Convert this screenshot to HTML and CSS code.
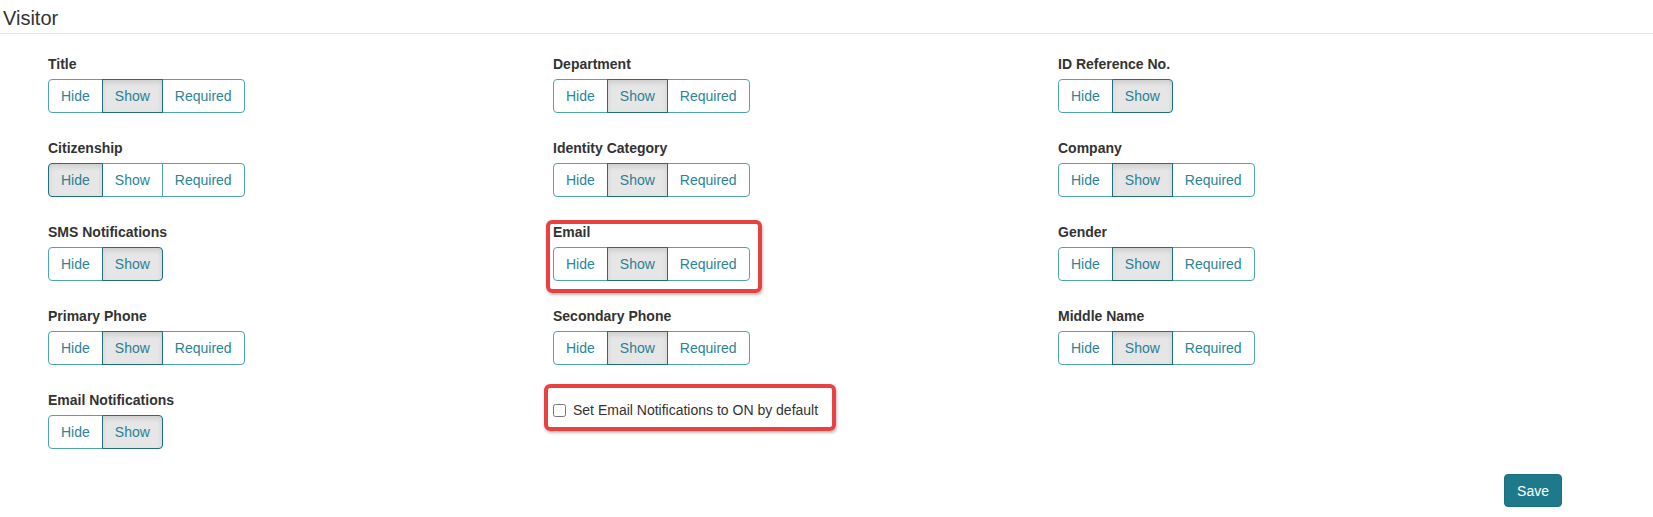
FILE: index.html
```html
<!DOCTYPE html>
<html>
<head>
<meta charset="utf-8">
<link rel="stylesheet" href="styles.css">
</head>
<body>
<h2 class="section-title">Visitor</h2>
<div class="fields">
  <div class="field">
    <div class="field-label">Title</div>
    <div class="btn-group"><button class="btn">Hide</button><button class="btn active">Show</button><button class="btn">Required</button></div>
  </div>
  <div class="field">
    <div class="field-label">Department</div>
    <div class="btn-group"><button class="btn">Hide</button><button class="btn active">Show</button><button class="btn">Required</button></div>
  </div>
  <div class="field">
    <div class="field-label">ID Reference No.</div>
    <div class="btn-group"><button class="btn">Hide</button><button class="btn active">Show</button></div>
  </div>

  <div class="field">
    <div class="field-label">Citizenship</div>
    <div class="btn-group"><button class="btn active">Hide</button><button class="btn">Show</button><button class="btn">Required</button></div>
  </div>
  <div class="field">
    <div class="field-label">Identity Category</div>
    <div class="btn-group"><button class="btn">Hide</button><button class="btn active">Show</button><button class="btn">Required</button></div>
  </div>
  <div class="field">
    <div class="field-label">Company</div>
    <div class="btn-group"><button class="btn">Hide</button><button class="btn active">Show</button><button class="btn">Required</button></div>
  </div>

  <div class="field">
    <div class="field-label">SMS Notifications</div>
    <div class="btn-group"><button class="btn">Hide</button><button class="btn active">Show</button></div>
  </div>
  <div class="field highlight highlight-email">
    <div class="field-label">Email</div>
    <div class="btn-group"><button class="btn">Hide</button><button class="btn active">Show</button><button class="btn">Required</button></div>
  </div>
  <div class="field">
    <div class="field-label">Gender</div>
    <div class="btn-group"><button class="btn">Hide</button><button class="btn active">Show</button><button class="btn">Required</button></div>
  </div>

  <div class="field">
    <div class="field-label">Primary Phone</div>
    <div class="btn-group"><button class="btn">Hide</button><button class="btn active">Show</button><button class="btn">Required</button></div>
  </div>
  <div class="field">
    <div class="field-label">Secondary Phone</div>
    <div class="btn-group"><button class="btn">Hide</button><button class="btn active">Show</button><button class="btn">Required</button></div>
  </div>
  <div class="field">
    <div class="field-label">Middle Name</div>
    <div class="btn-group"><button class="btn">Hide</button><button class="btn active">Show</button><button class="btn">Required</button></div>
  </div>

  <div class="field">
    <div class="field-label">Email Notifications</div>
    <div class="btn-group"><button class="btn">Hide</button><button class="btn active">Show</button></div>
  </div>
  <div class="field check-field highlight highlight-check">
    <label class="check-label"><input type="checkbox" class="check-input"><span>Set Email Notifications to ON by default</span></label>
  </div>
  <div class="field"></div>
</div>
<div class="actions">
  <button class="btn-save">Save</button>
</div>
</body>
</html>
```

FILE: styles.css
```css
*, *::before, *::after { box-sizing: border-box; }

body {
  margin: 0;
  font-family: "Liberation Sans", Arial, sans-serif;
  font-size: 14px;
  line-height: 20px;
  color: #333;
  background: #fff;
}

.section-title {
  margin: 6px 0 0 0;
  padding: 0 0 3px 3px;
  font-size: 20px;
  line-height: 24px;
  font-weight: normal;
  color: #333;
  border-bottom: 1px solid #e5e5e5;
}

.fields {
  display: grid;
  grid-template-columns: 505px 505px 505px;
  row-gap: 25px;
  padding: 20px 0 0 48px;
}

.field {
  position: relative;
  min-height: 59px;
}

.field-label {
  font-weight: bold;
  font-size: 14px;
  line-height: 20px;
  margin-bottom: 5px;
  color: #333;
}

.btn-group {
  display: inline-flex;
}

.btn {
  font-family: inherit;
  font-size: 14px;
  line-height: 20px;
  height: 34px;
  padding: 6px 12px;
  margin: 0;
  background: #fff;
  color: #2a8696;
  border: 1px solid #4fa4b1;
  border-radius: 0;
  cursor: pointer;
}

.btn + .btn { margin-left: -1px; }

.btn:first-child { border-radius: 4px 0 0 4px; }
.btn:last-child { border-radius: 0 4px 4px 0; }

.btn.active {
  position: relative;
  z-index: 1;
  background: #e6e6e6;
  border-color: #1f6f7e;
  color: #2a8193;
  box-shadow: inset 0 3px 5px rgba(0, 0, 0, 0.1);
}

.check-field {
  padding-top: 10px;
}

.check-label {
  display: flex;
  align-items: center;
  height: 20px;
  font-size: 14px;
  color: #333;
}

.check-input {
  width: 13px;
  height: 13px;
  margin: 0 7px 0 0;
}

.highlight::after {
  content: "";
  position: absolute;
  border: 4px solid #e9413f;
  border-radius: 6px;
  box-shadow: 1px 2px 3px rgba(0, 0, 0, 0.25);
  pointer-events: none;
}

.highlight-email::after {
  left: -7px;
  top: -2px;
  width: 216px;
  height: 73px;
}

.highlight-check::after {
  left: -9px;
  top: -6px;
  width: 292px;
  height: 47px;
}

.actions {
  display: flex;
  justify-content: flex-end;
  padding: 25px 91px 0 0;
}

.btn-save {
  font-family: inherit;
  font-size: 14px;
  line-height: 20px;
  height: 33px;
  padding: 6px 12px;
  background: #1e7a8a;
  color: #fff;
  border: 1px solid #1b6f7e;
  border-radius: 4px;
}
```
